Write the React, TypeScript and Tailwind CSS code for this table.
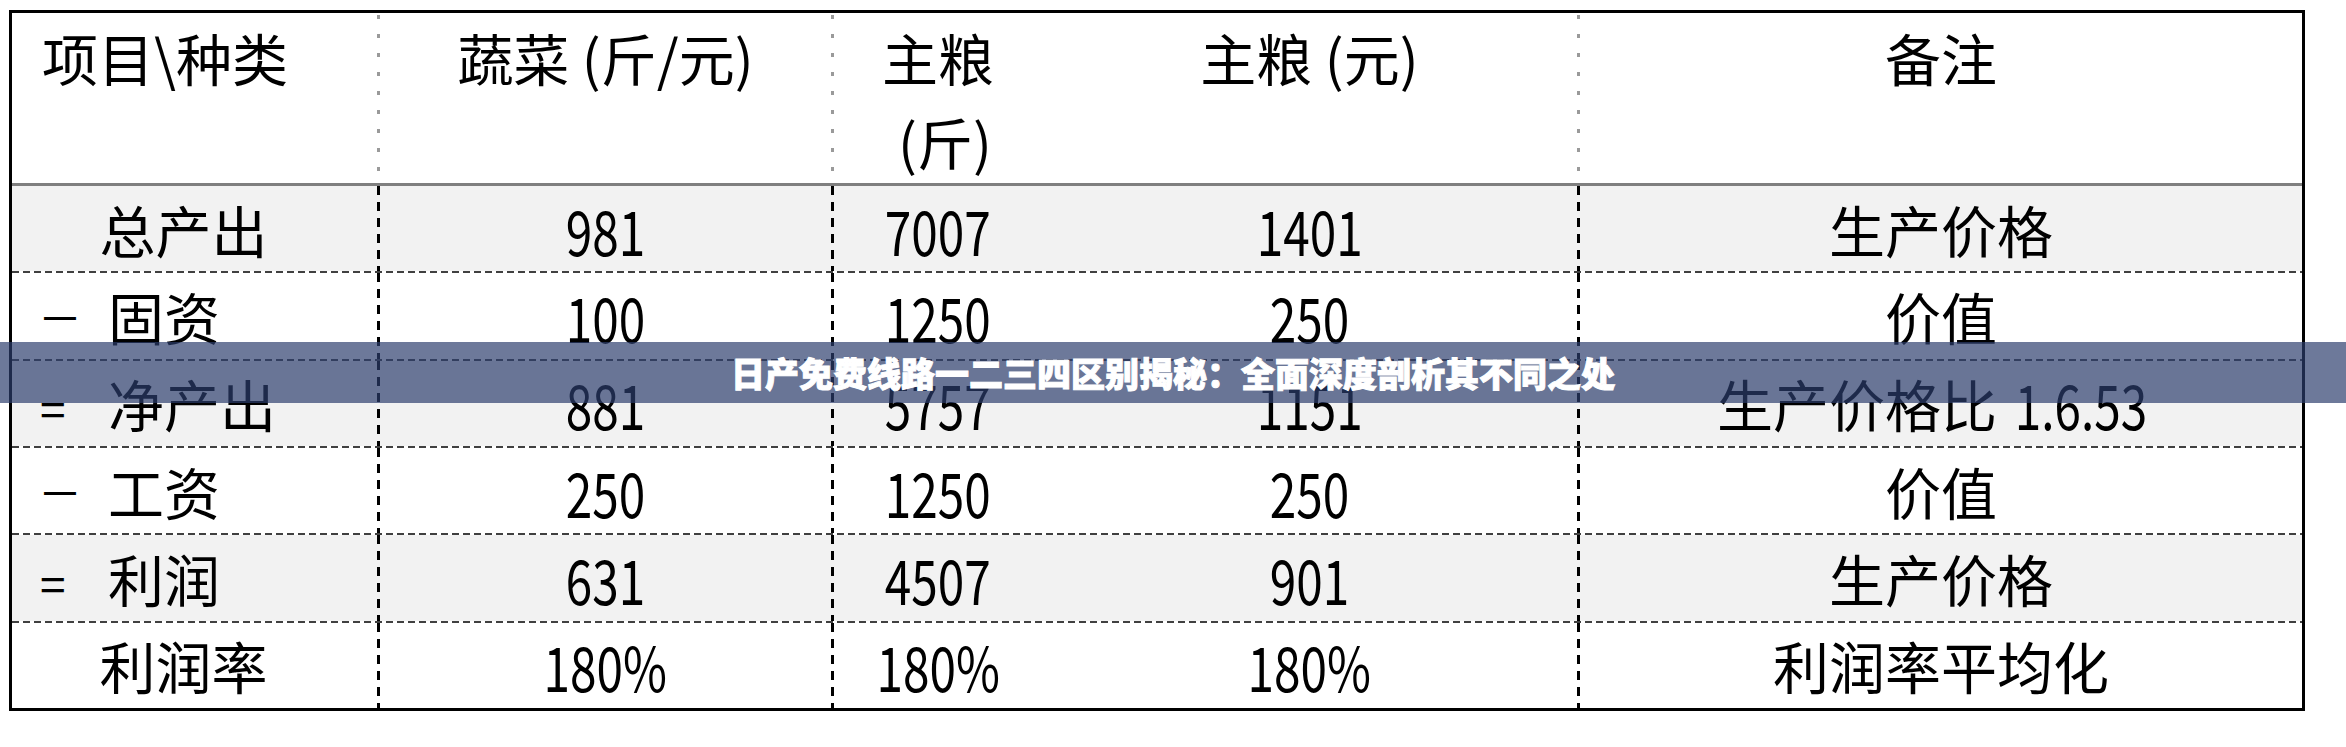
import React from 'react'

const grid = 'grid grid-cols-[365px_3px_451px_3px_208px_535px_3px_722px]'
const dotted = 'bg-[repeating-linear-gradient(to_bottom,#9a9a9a_0_4px,transparent_4px_19px)]'
const dashed = 'bg-[repeating-linear-gradient(to_bottom,#000_0_9px,transparent_9px_16px)]'
const rowLine = 'h-[2px] shrink-0 bg-[repeating-linear-gradient(to_right,#404040_0_7px,transparent_7px_11px)]'

type Row = {
    sym?: string
    label: string
    values: string[]
    note: string
    noteNum?: string
    gray?: boolean
}

const rows: Row[] = [
    { label: '总产出', values: ['981', '7007', '1401'], note: '生产价格', gray: true },
    { sym: '－', label: '固资', values: ['100', '1250', '250'], note: '价值' },
    { sym: '=', label: '净产出', values: ['881', '5757', '1151'], note: '生产价格比', noteNum: '1.6.53', gray: true },
    { sym: '－', label: '工资', values: ['250', '1250', '250'], note: '价值' },
    { sym: '=', label: '利润', values: ['631', '4507', '901'], note: '生产价格', gray: true },
    { label: '利润率', values: ['180%', '180%', '180%'], note: '利润率平均化' },
]

function Num({ children }: { children: string }) {
    return <span className="inline-block text-[62px] scale-x-[0.77]">{children}</span>
}

function BodyRow({ row }: { row: Row }) {
    return (
        <div className={`${grid} flex-1 min-h-0 leading-none ${row.gray ? 'bg-[#f2f2f2]' : 'bg-white'}`}>
            {row.sym ? (
                <div className="flex items-center pl-[26px]">
                    {row.sym === '=' ? (
                        <span className="w-[70px] text-[46px] pl-[2px] pt-[8px]">=</span>
                    ) : (
                        <span className="w-[70px] text-[44px]">－</span>
                    )}
                    <span>{row.label}</span>
                </div>
            ) : (
                <div className="flex items-center justify-center pr-[22px]">{row.label}</div>
            )}
            <div className={dashed} />
            <div className="flex items-center justify-center">
                <Num>{row.values[0]}</Num>
            </div>
            <div className={dashed} />
            <div className="flex items-center justify-center">
                <Num>{row.values[1]}</Num>
            </div>
            <div className="flex items-center justify-center">
                <Num>{row.values[2]}</Num>
            </div>
            <div className={dashed} />
            <div className="flex items-center justify-center">
                {row.note}
                {row.noteNum && (
                    <span className="inline-block -mx-[2px] text-[62px] scale-x-[0.77]">{row.noteNum}</span>
                )}
            </div>
        </div>
    )
}

export default function App() {
    return (
        <div className="relative w-[2346px] h-[747px] overflow-hidden bg-white font-['Noto_Sans_CJK_SC',sans-serif] text-[56px] text-black">
            <div className="ml-[9px] mt-[10px] w-[2296px] h-[701px] border-[3px] border-black flex flex-col">
                <div className={`${grid} h-[170px] shrink-0 leading-[84px] pt-[2px]`}>
                    <div className="pl-[30px]">项目\种类</div>
                    <div className={dotted} />
                    <div className="text-center">蔬菜 (斤/元)</div>
                    <div className={dotted} />
                    <div className="text-center">
                        主粮
                        <br />
                        <span className="pl-[14px]">(斤)</span>
                    </div>
                    <div className="text-center">主粮 (元)</div>
                    <div className={dotted} />
                    <div className="text-center">备注</div>
                </div>
                <div className="h-[3px] shrink-0 bg-[#7f7f7f]" />
                {rows.map((row, i) => (
                    <React.Fragment key={row.label}>
                        {i > 0 && <div className={rowLine} />}
                        <BodyRow row={row} />
                    </React.Fragment>
                ))}
            </div>

            <div className="absolute left-0 top-[342px] w-full h-[61px] bg-[rgba(44,61,108,0.69)] flex items-center justify-center">
                <span className="font-['Noto_Sans_CJK_SC',sans-serif] font-black text-[34px] leading-none text-white [-webkit-text-stroke:1px_white]">
                    日产免费线路一二三四区别揭秘：全面深度剖析其不同之处
                </span>
            </div>
        </div>
    )
}
